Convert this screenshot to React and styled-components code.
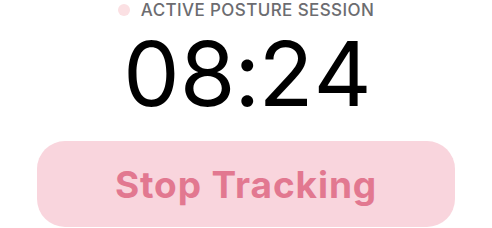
import styled, { createGlobalStyle } from 'styled-components'

const Global = createGlobalStyle`
  html, body {
    margin: 0;
    padding: 0;
    background: #ffffff;
  }
  body {
    font-family: Inter, "Noto Sans", "Liberation Sans", sans-serif;
    -webkit-font-smoothing: antialiased;
  }
`;

const Panel = styled.div`
  width: 492px;
  height: 228px;
  box-sizing: border-box;
  padding: 0 37px;
  display: flex;
  flex-direction: column;
  align-items: center;
  overflow: hidden;
`;

const Status = styled.div`
  height: 22px;
  display: flex;
  align-items: center;
  gap: 11px;
  margin-top: -1px;
`;

const Dot = styled.span`
  width: 12px;
  height: 12px;
  border-radius: 50%;
  background: ${({ color }) => color};
`;

const Label = styled.span`
  font-size: 17px;
  font-weight: 500;
  letter-spacing: 0.4px;
  color: #6c6c70;
  text-transform: uppercase;
`;

const Timer = styled.div`
  font-size: 90px;
  font-weight: 400;
  line-height: 1;
  color: #000;
  font-variant-numeric: tabular-nums;
  letter-spacing: -2px;
  margin-top: 8px;
`;

const StopButton = styled.button`
  margin-top: 22px;
  width: 100%;
  height: 86px;
  border: none;
  border-radius: 28px;
  background: #f9d5dd;
  color: #e27890;
  font-family: inherit;
  font-size: 37px;
  font-weight: 700;
  letter-spacing: 0.9px;
  cursor: pointer;
`;

export default function App() {
  return (
    <>
      <Global />
      <Panel>
        <Status>
          <Dot color="#fbe0e3" />
          <Label>Active Posture Session</Label>
        </Status>
        <Timer>08:24</Timer>
        <StopButton>Stop Tracking</StopButton>
      </Panel>
    </>
  );
}
